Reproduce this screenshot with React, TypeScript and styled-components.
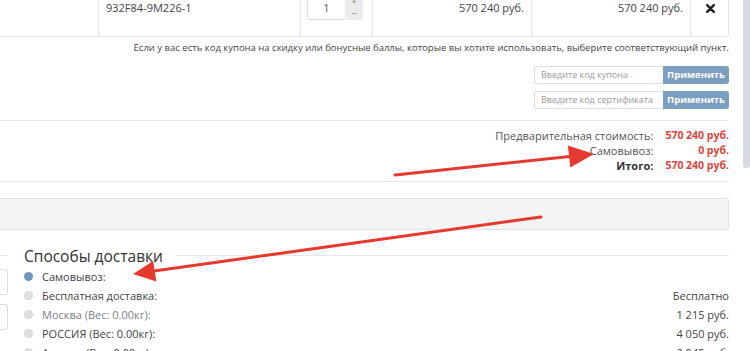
import styled, { createGlobalStyle } from "styled-components";

const GlobalStyle = createGlobalStyle`
  html, body {
    margin: 0;
    padding: 0;
    background: #fff;
    overflow: hidden;
  }
  body {
    font-family: "Open Sans", "Liberation Sans", sans-serif;
    font-size: 11px;
    color: #444;
  }
`;

const deliveries = [
  { label: "Самовывоз:", price: "", selected: true, muted: false },
  { label: "Бесплатная доставка:", price: "Бесплатно", selected: false, muted: false },
  { label: "Москва (Вес: 0.00кг):", price: "1 215 руб.", selected: false, muted: true },
  { label: "РОССИЯ (Вес: 0.00кг):", price: "4 050 руб.", selected: false, muted: false },
  { label: "Алматы (Вес: 0.00кг):", price: "2 945 руб.", selected: false, muted: false },
];

export default function App() {
  return (
    <Page>
      <GlobalStyle />
      <Content>
        <CartRow>
          <Cell $first />
          <Cell>932F84-9M226-1</Cell>
          <QtyCell>
            <QtyInput>1</QtyInput>
            <Spinner>
              <SpinBtn>+</SpinBtn>
              <SpinBtn>−</SpinBtn>
            </Spinner>
          </QtyCell>
          <Cell $right>570 240 руб.</Cell>
          <Cell $right>570 240 руб.</Cell>
          <RemoveCell>
            <svg width="9" height="9" viewBox="0 0 9 9">
              <path d="M1.2 1.2 L7.8 7.8 M7.8 1.2 L1.2 7.8" stroke="#222" strokeWidth="2.4" strokeLinecap="round" />
            </svg>
          </RemoveCell>
        </CartRow>

        <CouponNote>
          Если у вас есть код купона на скидку или бонусные баллы, которые вы хотите использовать, выберите соответствующий пункт.
        </CouponNote>
        <CouponGroup>
          <CodeInput>Введите код купона</CodeInput>
          <ApplyButton>Применить</ApplyButton>
        </CouponGroup>
        <CouponGroup $second>
          <CodeInput>Введите код сертификата</CodeInput>
          <ApplyButton>Применить</ApplyButton>
        </CouponGroup>

        <Totals>
          <TotalLabel>Предварительная стоимость:</TotalLabel>
          <TotalValue>570 240 руб.</TotalValue>
          <TotalLabel>Самовывоз:</TotalLabel>
          <TotalValue>0 руб.</TotalValue>
          <TotalLabel $strong>Итого:</TotalLabel>
          <TotalValue>570 240 руб.</TotalValue>
        </Totals>

        <GreyBar />

        <BottomGrid>
          <SideColumn>
            <SideBox />
            <SideBox />
          </SideColumn>
          <Delivery>
            <DeliveryHead>
              <DeliveryTitle>Способы доставки</DeliveryTitle>
              <HeadLine />
            </DeliveryHead>
            {deliveries.map((d) => (
              <DeliveryRow key={d.label}>
                <Radio $on={d.selected} />
                <DeliveryLabel $muted={d.muted}>{d.label}</DeliveryLabel>
                <DeliveryPrice>{d.price}</DeliveryPrice>
              </DeliveryRow>
            ))}
          </Delivery>
        </BottomGrid>
      </Content>

      <Scrollbar>
        <Thumb />
      </Scrollbar>

      <Arrows width="750" height="351" viewBox="0 0 750 351">
        <path d="M395 175 L572 156.2" stroke="#e53a2f" strokeWidth="3" strokeLinecap="round" />
        <polygon points="594,154 570.3,167.6 567.9,145.4" fill="#e53a2f" />
        <path d="M541 217 L152 271.3" stroke="#e53a2f" strokeWidth="3" strokeLinecap="round" />
        <polygon points="133,274 153.2,261 156.4,281.4" fill="#e53a2f" />
      </Arrows>
    </Page>
  );
}

const Page = styled.div`
  position: relative;
  width: 750px;
  height: 351px;
  overflow: hidden;
  display: flex;
`;

const Content = styled.div`
  width: 729px;
  flex: none;
`;

const CartRow = styled.div`
  display: grid;
  grid-template-columns: 98px 202px 72px 159px 159px 39px;
  margin-top: -12px;
  border-bottom: 1px solid #e6e6e6;
  border-right: 1px solid #e6e6e6;
  border-bottom-right-radius: 4px;
`;

const Cell = styled.div<{ $first?: boolean; $right?: boolean }>`
  height: 48px;
  box-sizing: border-box;
  padding: 12px 7px 0;
  line-height: 16px;
  font-size: 11px;
  color: #444;
  text-align: ${(p) => (p.$right ? "right" : "left")};
  border-left: ${(p) => (p.$first ? "none" : "1px solid #e6e6e6")};
`;

const QtyCell = styled.div`
  height: 48px;
  box-sizing: border-box;
  padding: 8px 0 0 6px;
  border-left: 1px solid #e6e6e6;
  display: flex;
  align-items: flex-start;
`;

const QtyInput = styled.div`
  width: 38px;
  height: 24px;
  box-sizing: border-box;
  border: 1px solid #dcdcdc;
  border-right: none;
  border-radius: 3px 0 0 3px;
  text-align: center;
  line-height: 22px;
  font-size: 11px;
  color: #555;
`;

const Spinner = styled.div`
  width: 18px;
  height: 24px;
  display: flex;
  flex-direction: column;
  background: #ececec;
  border-radius: 0 3px 3px 0;
  overflow: hidden;
`;

const SpinBtn = styled.div`
  height: 12px;
  line-height: 12px;
  text-align: center;
  font-size: 9px;
  color: #777;
`;

const RemoveCell = styled.div`
  height: 48px;
  box-sizing: border-box;
  border-left: 1px solid #e6e6e6;
  display: flex;
  justify-content: center;
  padding-top: 16px;
`;

const CouponNote = styled.div`
  margin-top: 3px;
  line-height: 16px;
  text-align: right;
  font-size: 9.5px;
  color: #444;
  white-space: nowrap;
`;

const CouponGroup = styled.div<{ $second?: boolean }>`
  display: flex;
  justify-content: flex-end;
  margin-top: ${(p) => (p.$second ? "7px" : "10px")};
  height: 18px;
`;

const CodeInput = styled.div`
  width: 129px;
  box-sizing: border-box;
  border: 1px solid #dedede;
  border-right: none;
  border-radius: 3px 0 0 3px;
  padding-left: 6px;
  line-height: 16px;
  font-size: 9px;
  color: #999;
  white-space: nowrap;
  overflow: hidden;
`;

const ApplyButton = styled.div`
  width: 66px;
  background: #7b9fc1;
  border-radius: 0 3px 3px 0;
  color: #fff;
  font-weight: 700;
  font-size: 9.5px;
  line-height: 18px;
  text-align: center;
  white-space: nowrap;
`;

const Totals = styled.div`
  margin-top: 11px;
  border-top: 1px solid #e6e6e6;
  border-bottom: 1px solid #e6e6e6;
  padding: 7px 0 8px;
  display: grid;
  grid-template-columns: auto auto;
  justify-content: end;
  column-gap: 12px;
  line-height: 15px;
`;

const TotalLabel = styled.div<{ $strong?: boolean }>`
  text-align: right;
  font-size: 11px;
  white-space: nowrap;
  color: ${(p) => (p.$strong ? "#333" : "#555")};
  font-weight: ${(p) => (p.$strong ? 700 : 400)};
`;

const TotalValue = styled.div`
  text-align: right;
  font-size: 10.5px;
  font-weight: 700;
  white-space: nowrap;
  color: #d9453d;
`;

const GreyBar = styled.div`
  margin-top: 16px;
  height: 32px;
  box-sizing: border-box;
  background: #f4f4f4;
  border: 1px solid #e4e4e4;
  border-left: none;
  border-radius: 0 3px 3px 0;
`;

const BottomGrid = styled.div`
  display: grid;
  grid-template-columns: 8px 1fr;
  column-gap: 16px;
  margin-top: 15px;
`;

const SideColumn = styled.div`
  margin-top: 10px;
  border-top: 1px solid #e6e6e6;
  padding-top: 13px;
  display: flex;
  flex-direction: column;
  gap: 9px;
`;

const SideBox = styled.div`
  height: 26px;
  box-sizing: border-box;
  border: 1px solid #dcdcdc;
  border-left: none;
  border-radius: 0 3px 3px 0;
`;

const Delivery = styled.div`
  display: flex;
  flex-direction: column;
`;

const DeliveryHead = styled.div`
  display: flex;
  align-items: center;
  height: 22px;
`;

const DeliveryTitle = styled.div`
  font-size: 15.5px;
  line-height: 22px;
  color: #333;
`;

const HeadLine = styled.div`
  flex: 1;
  height: 1px;
  background: #e6e6e6;
  margin-left: 13px;
  margin-top: -2px;
`;

const DeliveryRow = styled.div`
  display: flex;
  align-items: center;
  height: 19px;
`;

const Radio = styled.div<{ $on: boolean }>`
  width: 9px;
  height: 9px;
  box-sizing: border-box;
  border-radius: 50%;
  background: ${(p) => (p.$on ? "#6f96bd" : "#e2e2e2")};
  border: 1px solid ${(p) => (p.$on ? "#6590b8" : "#d2d2d2")};
  margin-right: 9px;
`;

const DeliveryLabel = styled.div<{ $muted: boolean }>`
  font-size: 11px;
  color: ${(p) => (p.$muted ? "#7a7f8a" : "#444")};
`;

const DeliveryPrice = styled.div`
  margin-left: auto;
  font-size: 11px;
  color: #444;
`;

const Scrollbar = styled.div`
  margin-left: auto;
  width: 7px;
  height: 100%;
`;

const Thumb = styled.div`
  height: 168px;
  background: #d5dce4;
  border-radius: 0 0 3px 3px;
`;

const Arrows = styled.svg`
  position: absolute;
  left: 0;
  top: 0;
  pointer-events: none;
`;
